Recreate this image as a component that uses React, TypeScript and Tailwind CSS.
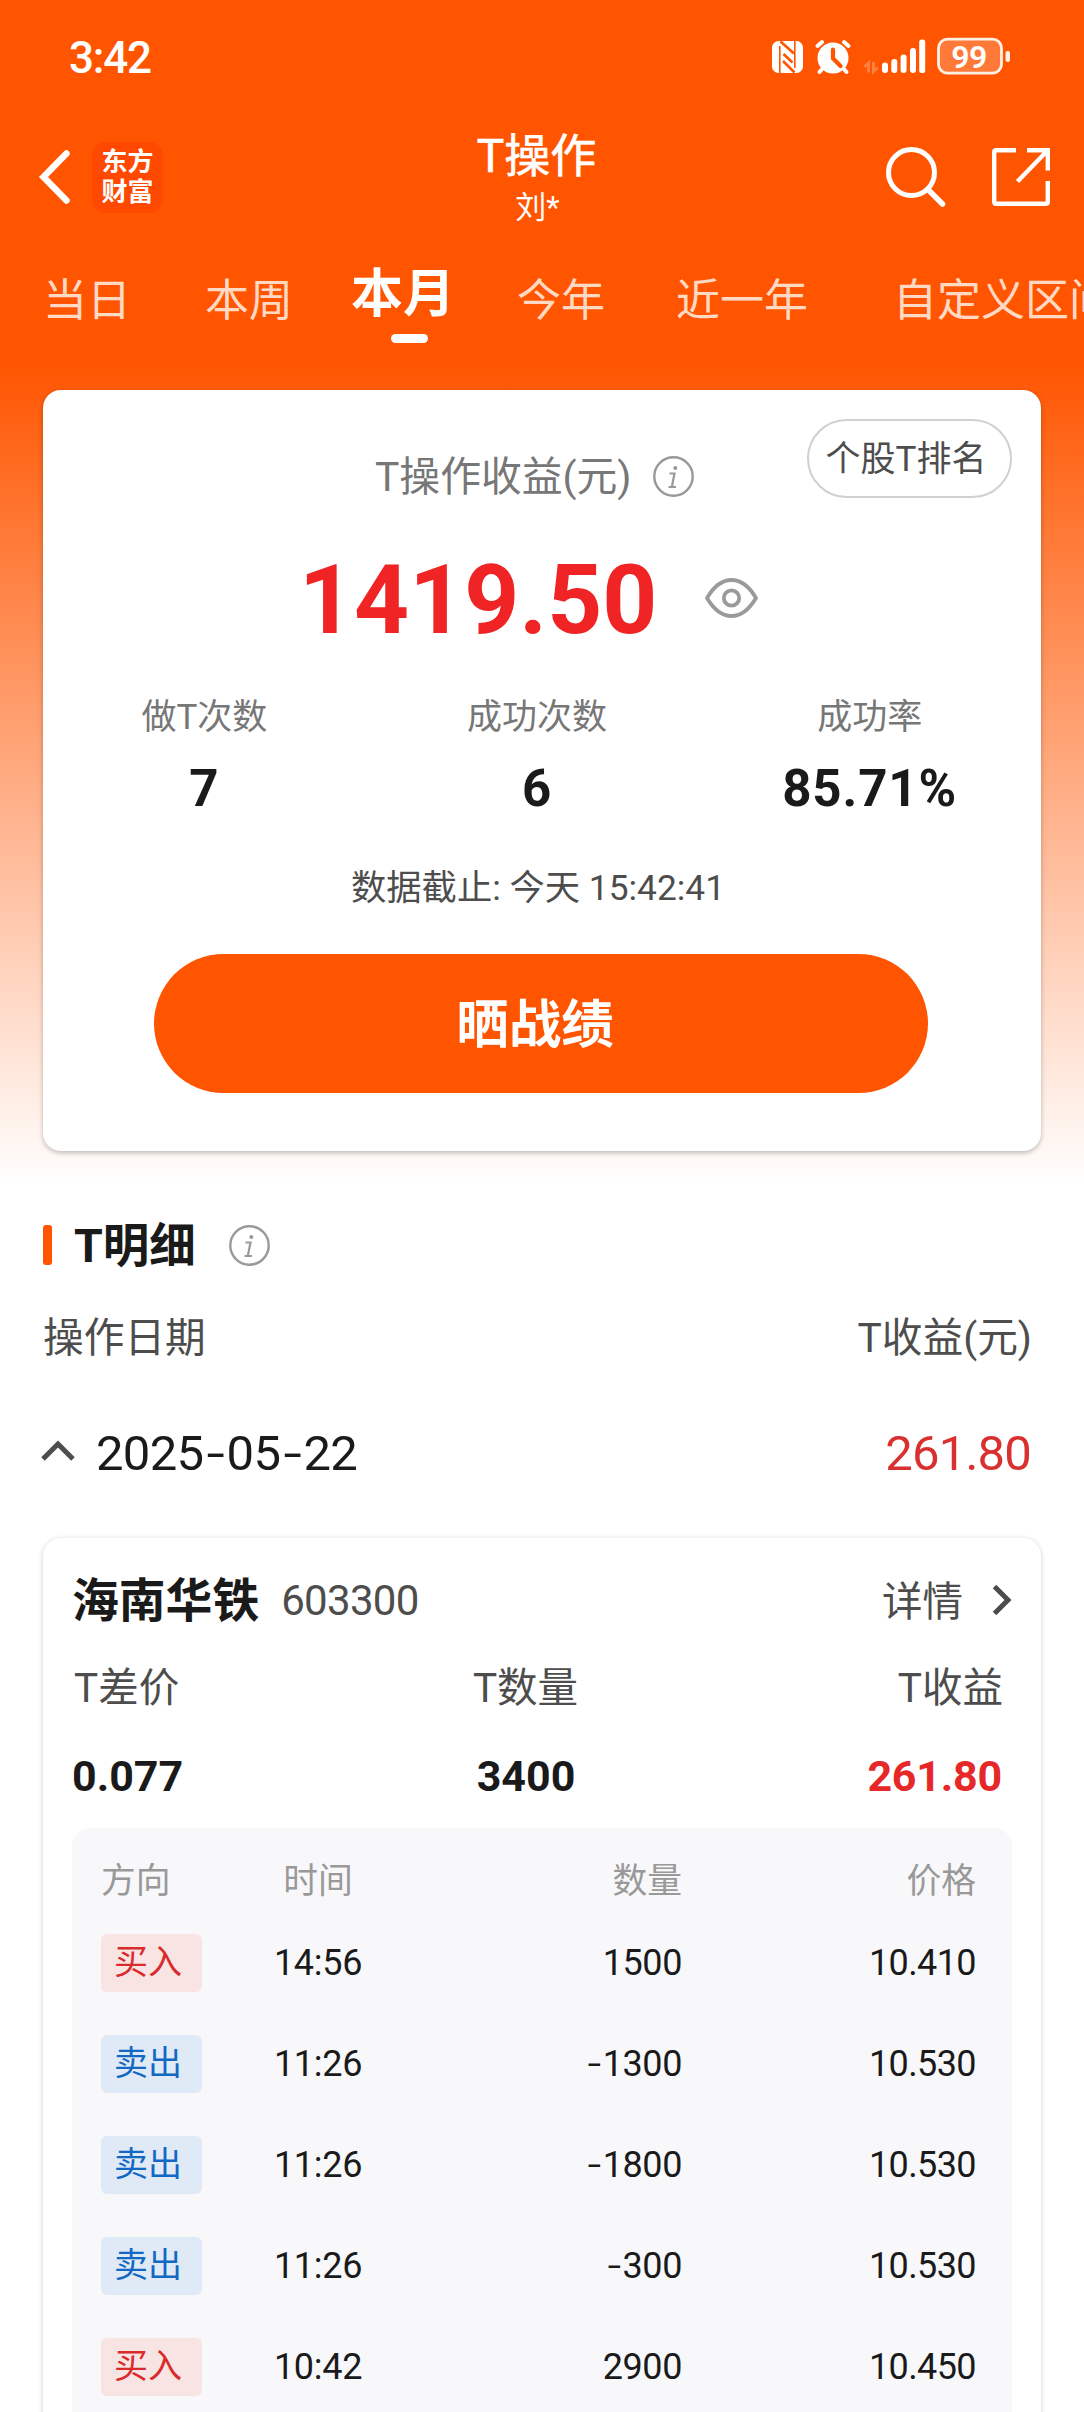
import clsx from 'clsx';

const tabs = [
  { label: '当日', className: 'ml-[43px]' },
  { label: '本周', className: 'ml-[74px]' },
  { label: '本月', className: 'ml-[58px]', active: true },
  { label: '今年', className: 'ml-[62px]' },
  { label: '近一年', className: 'ml-[71px]' },
  { label: '自定义区间', className: 'ml-[85px]' },
];

const stats = [
  { label: '做T次数', value: '7' },
  { label: '成功次数', value: '6' },
  { label: '成功率', value: '85.71%' },
];

const trades = [
  { side: '买入', time: '14:56', amount: '1500', price: '10.410' },
  { side: '卖出', time: '11:26', amount: '-1300', price: '10.530' },
  { side: '卖出', time: '11:26', amount: '-1800', price: '10.530' },
  { side: '卖出', time: '11:26', amount: '-300', price: '10.530' },
  { side: '买入', time: '10:42', amount: '2900', price: '10.450' },
];

// Roboto's hyphen is too short next to tabular digits
const Numeric = ({ value }: { value: string }) => (
  <>
    {value.split('').map((char, index) =>
      char === '-' ? (
        <span key={index} className="inline-block leading-[0] mx-[0.07em] scale-x-125 -translate-y-[0.03em] font-['Noto_Sans_CJK_SC']">
          -
        </span>
      ) : (
        char
      )
    )}
  </>
);

const InfoIcon = () => (
  <svg className="w-[41px] h-[41px] shrink-0" viewBox="0 0 41 41" fill="none" stroke="#999999">
    <circle cx="20.5" cy="20.5" r="19.2" strokeWidth="2.4" />
    <circle cx="22.3" cy="12" r="2" fill="#999999" stroke="none" />
    <path d="M16.5 17.5h5l-2.6 13M15.5 31h7.5" strokeWidth="2.2" />
  </svg>
);

const EyeIcon = () => (
  <svg className="w-[53px] h-[40px]" viewBox="0 0 53 40" fill="none" stroke="#9a9a9a" strokeWidth="3.8">
    <path d="M2 20C8.500 9 16 2 26.500 2S44.500 9 51 20C44.500 31 37 38 26.500 38S8.500 31 2 20Z" strokeLinejoin="round" />
    <circle cx="26.500" cy="20" r="7.700" />
  </svg>
);

const StatusBar = () => (
  <div className="h-[114px] flex items-center justify-between pl-[69px] pr-[74px] text-white">
    <span className="mt-[2px] text-[44px] font-medium leading-none tracking-[-1.2px]">3:42</span>
    <svg className="w-[238px] h-[38px] -mt-[2px]" viewBox="0 0 238 38" fill="none">
      {/* NFC */}
      <rect x="0" y="4" width="31" height="32" rx="6.500" fill="#fff" />
      <path d="M7.800 36V9M22.800 31V4" stroke="#ff5500" strokeWidth="1.600" />
      <path d="M8.500 4.500L22 16.500M11.500 17L20.500 25.500M11 24L22.500 35.500" stroke="#ff5500" strokeWidth="2.600" />
      {/* alarm */}
      <circle cx="61" cy="21" r="15.500" fill="#fff" />
      <path d="M45.500 9L50 5M76.500 9L72 5M51 31L47.500 35M71 31L74.500 35" stroke="#fff" strokeWidth="4" strokeLinecap="round" />
      <path d="M61 12.500V21.500L68.500 29" stroke="#ff5500" strokeWidth="4.200" strokeLinecap="round" />
      {/* data arrows */}
      <path d="M92.500 30L96.500 26V35.500M101.500 25V34.500L105.500 30.500" stroke="#ff8040" strokeWidth="3" />
      {/* signal */}
      <rect x="110" y="25.500" width="6" height="10.500" rx="3" fill="#fff" />
      <rect x="119.300" y="22" width="6" height="14" rx="3" fill="#fff" />
      <rect x="128.600" y="17.500" width="6" height="18.500" rx="3" fill="#fff" />
      <rect x="138" y="11" width="6" height="25" rx="3" fill="#fff" />
      <rect x="147.200" y="2.500" width="6" height="33.500" rx="2.500" fill="#fff" />
      {/* battery */}
      <rect x="166.500" y="2.200" width="63" height="34" rx="9" fill="#ff7a38" stroke="#fff0e6" strokeWidth="2.800" />
      <rect x="233.500" y="14" width="4.500" height="11" rx="2" fill="#fff0e6" />
      <text x="197" y="30.500" textAnchor="middle" fill="#fff" fontSize="32" fontWeight="600" letterSpacing="-0.500">99</text>
    </svg>
  </div>
);

const NavBar = () => (
  <div className="h-[126px] grid grid-cols-3 items-center pl-[38px] pr-[33px] text-white">
    <div className="flex items-center">
      <svg className="w-[34px] h-[56px]" viewBox="0 0 34 56" fill="none" stroke="#fff" strokeWidth="6.500" strokeLinecap="round">
        <path d="M28.500 4.500L5.500 28L28.500 51.500" strokeLinejoin="miter" />
      </svg>
      <div className="ml-[20px] w-[71px] h-[71px] rounded-[14px] bg-[#ff4800] flex flex-col items-center justify-center text-[26px] leading-[30px] font-bold">
        <span>东方</span>
        <span>财富</span>
      </div>
    </div>
    <div className="flex flex-col items-center pr-[16px] pt-[3px]">
      <span className="text-[46px] leading-[58px] [-webkit-text-stroke:0.6px_white]">T操作</span>
      <span className="text-[31px] leading-[46px] pl-[2px]">刘*</span>
    </div>
    <div className="flex items-center justify-end gap-[45px]">
      <svg className="w-[62px] h-[62px]" viewBox="0 0 62 62" fill="none" stroke="#fff" strokeWidth="5">
        <circle cx="27.500" cy="26.500" r="23" />
        <path d="M44 43.500L58.500 58" strokeLinecap="round" strokeWidth="5.500" />
      </svg>
      <svg className="w-[60px] h-[60px]" viewBox="0 0 60 60" fill="none" stroke="#fff" strokeWidth="4.400">
        <path d="M25 3.200H5.200Q3.200 3.200 3.200 5.200V54.800Q3.200 56.800 5.200 56.800H54.800Q56.800 56.800 56.800 54.800V34" />
        <path d="M36 3.200H56.800V23.500M56 4L26.500 34.500" />
      </svg>
    </div>
  </div>
);

const Tabs = () => (
  <div className="h-[120px] flex items-center overflow-hidden whitespace-nowrap">
    {tabs.map((tab) => (
      <div
        key={tab.label}
        className={clsx(
          'relative shrink-0 leading-[60px]',
          tab.className,
          tab.active ? 'text-[52px] font-bold text-white -mt-[11px]' : 'text-[44px] text-[#ffd9c4] mt-[2px]'
        )}
      >
        {tab.label}
        {tab.active && <span className="absolute left-[40px] top-[69px] w-[37px] h-[9px] rounded-full bg-white" />}
      </div>
    ))}
  </div>
);

const SummaryCard = () => (
  <div className="relative mx-[43px] mt-[30px] h-[761px] bg-white rounded-[18px] shadow-[0_2px_5px_rgba(0,0,0,0.25)] flex flex-col">
    <button className="absolute top-[29px] right-[29px] w-[205px] h-[79px] rounded-full border-2 border-[#d0d0d0] text-[35px] text-[#4d4d4d] pr-[7px] pt-[2px] leading-none">
      个股T排名
    </button>
    <div className="mt-[58px] pl-[332px] flex items-center gap-[21px] h-[57px]">
      <span className="pt-[2px] text-[40.800px] leading-none text-[#777777]">T操作收益(元)</span>
      <InfoIcon />
    </div>
    <div className="mt-[43px] pl-[256px] flex items-center h-[100px]">
      <span className="pt-[4px] w-[356px] text-[96px] leading-none font-bold text-[#f02424]">1419.50</span>
      <span className="ml-[50px]">
        <EyeIcon />
      </span>
    </div>
    <div className="mt-[42px] grid grid-cols-3 -ml-[5px] mr-[5px] text-center">
      {stats.map((stat) => (
        <div key={stat.label} className="flex flex-col">
          <span className="text-[35px] leading-[56px] text-[#777777]">{stat.label}</span>
          <span className="mt-[15px] text-[51px] leading-[56px] font-bold text-[#1a1a1a] tracking-[0.9px]">{stat.value}</span>
        </div>
      ))}
    </div>
    <div className="mt-[41px] pr-[8px] text-center text-[35.300px] leading-[60px] text-[#4d4d4d]">数据截止: 今天 15:42:41</div>
    <button className="mt-[36px] ml-[111px] w-[774px] h-[139px] shrink-0 rounded-full bg-[#ff5500] text-white text-[52.500px] leading-none font-bold pr-[12px] pt-[4px]">
      晒战绩
    </button>
  </div>
);

const TradeRow = ({ trade }: { trade: (typeof trades)[number] }) => (
  <div className="h-[101.200px] flex items-center text-[36px] leading-none text-[#1a1a1a]">
    <span
      className={clsx(
        'w-[101px] h-[58px] rounded-[6px] pl-[13px] text-[34px] leading-[56px]',
        trade.side === '买入' ? 'bg-[#f9e4e4] text-[#d92b2b]' : 'bg-[#dfeaf6] text-[#1268c3]'
      )}
    >
      {trade.side}
    </span>
    <span className="w-[232px] text-center tracking-[-0.3px]">{trade.time}</span>
    <span className="w-[248px] text-right tracking-[-0.4px]">
      <Numeric value={trade.amount} />
    </span>
    <span className="flex-1 text-right tracking-[-0.6px]">{trade.price}</span>
  </div>
);

const StockCard = () => (
  <div className="mx-[43px] px-[29px] h-[960px] bg-white rounded-[18px] shadow-[0_1px_5px_rgba(0,0,0,0.2)]">
    <div className="pt-[32px] h-[94px] flex items-center">
      <span className="text-[46.800px] leading-none font-bold text-[#1a1a1a]">海南华铁</span>
      <span className="ml-[22px] text-[42px] leading-none text-[#4d4d4d] tracking-[-0.7px]">603300</span>
      <span className="ml-auto pt-[2px] text-[40.500px] leading-none text-[#4d4d4d]">详情</span>
      <svg className="ml-[29px] -mt-[2px] w-[20px] h-[32px]" viewBox="0 0 20 32" fill="none" stroke="#4d4d4d" strokeWidth="5">
        <path d="M2.500 2.500L16 16L2.500 29.500" />
      </svg>
    </div>
    <div className="mt-[26px] grid grid-cols-3 pl-[2px] pr-[9px] text-[40.500px] leading-[60px] text-[#4d4d4d]">
      <span>T差价</span>
      <span className="text-center pr-[26px]">T数量</span>
      <span className="text-right">T收益</span>
    </div>
    <div className="mt-[27px] grid grid-cols-3 pr-[10px] text-[43px] leading-[62px] font-bold text-[#1a1a1a]">
      <span>0.077</span>
      <span className="text-center pr-[22px]">3400</span>
      <span className="text-right text-[#e62828] tracking-[-0.2px]">261.80</span>
    </div>
    <div className="mt-[21px] h-[680px] rounded-[18px] bg-[#f8f8fb] pl-[29px] pr-[36px] pt-[23px]">
      <div className="flex text-[34.800px] leading-[61px] text-[#999999]">
        <span className="w-[101px]">方向</span>
        <span className="w-[232px] text-center">时间</span>
        <span className="w-[248px] text-right">数量</span>
        <span className="flex-1 text-right">价格</span>
      </div>
      {trades.map((trade, index) => (
        <TradeRow key={index} trade={trade} />
      ))}
    </div>
  </div>
);

const App = () => {
  return (
    <div
      className="w-[1084px] h-[2412px] overflow-hidden bg-white font-[Roboto,'Noto_Sans_CJK_SC',sans-serif]"
      lang="zh-CN"
    >
      <div className="h-[1190px] bg-[linear-gradient(to_bottom,#ff5500_0px,#ff5500_360px,#ffffff_1185px)]">
        <StatusBar />
        <NavBar />
        <Tabs />
        <SummaryCard />
      </div>

      <section>
        <div className="h-[110px] flex items-center pl-[43px]">
          <span className="w-[9px] h-[40px] rounded-[3px] bg-[#ff5500]" />
          <span className="ml-[22px] pt-[3px] text-[46.500px] leading-none font-bold text-[#1a1a1a]">T明细</span>
          <span className="ml-[33px]">
            <InfoIcon />
          </span>
        </div>
        <div className="mt-[8px] flex justify-between pl-[43px] pr-[52px] text-[40.700px] leading-[60px] text-[#4d4d4d]">
          <span>操作日期</span>
          <span>T收益(元)</span>
        </div>
        <div className="mt-[55px] h-[60px] flex items-center pl-[41px] pr-[53px] text-[49px] leading-none">
          <svg className="-mt-[6px] w-[34px] h-[21px]" viewBox="0 0 34 21" fill="none" stroke="#4d4d4d" strokeWidth="5">
            <path d="M2 19L17 4L32 19" />
          </svg>
          <span className="ml-[21px] text-[#1a1a1a] tracking-[-0.7px]">
            <Numeric value="2025-05-22" />
          </span>
          <span className="ml-auto text-[#d93030] tracking-[-0.8px]">261.80</span>
        </div>
        <div className="mt-[55px]">
          <StockCard />
        </div>
      </section>
    </div>
  );
};

export default App;
